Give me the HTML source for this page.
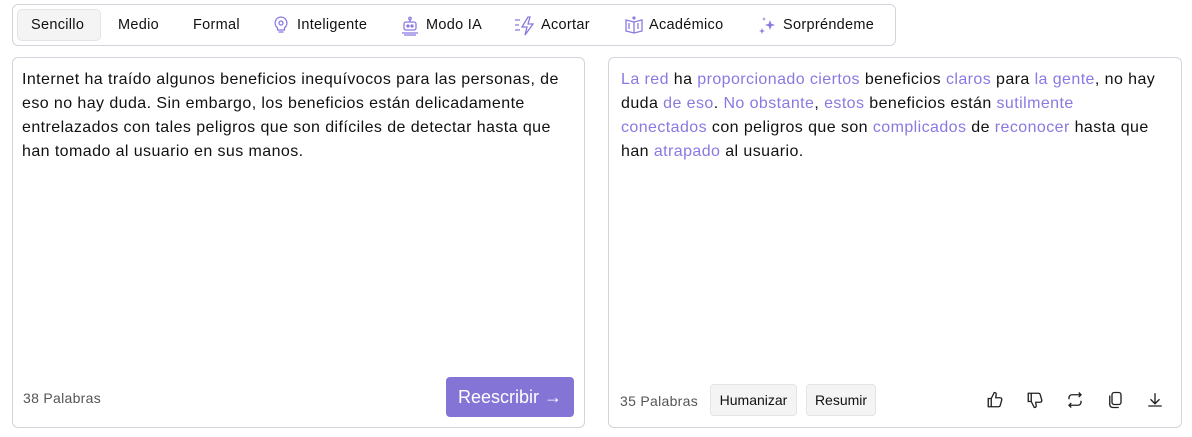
<!DOCTYPE html>
<html><head><meta charset="utf-8"><style>
*{box-sizing:border-box;margin:0;padding:0}
body{width:1192px;height:437px;background:#fff;font-family:"Liberation Sans",sans-serif;color:#111;position:relative;overflow:hidden}
.bar{position:absolute;left:12px;top:4px;width:884px;height:42px;border:1px solid #d4d4dc;border-radius:6px}
.it{position:absolute;top:0;height:40px;line-height:40px;font-size:14.5px;letter-spacing:0.3px;color:#111;white-space:nowrap}
.sel{position:absolute;left:4px;top:4px;width:84px;height:32px;background:#f4f4f5;border:1px solid #e4e4e7;border-radius:5px}
.ic{position:absolute;top:11px}
.panel{position:absolute;top:57px;height:371px;border:1px solid #d4d4dc;border-radius:6px}
.txt{position:absolute;left:9px;top:10px;font-size:16px;letter-spacing:0.42px;line-height:24px;color:#111;white-space:nowrap}
.p{color:#8b78e0}
.cnt{position:absolute;font-size:14px;letter-spacing:0.3px;color:#555}
.btn{position:absolute;background:#f4f4f5;border:1px solid #e4e4e7;border-radius:4px;font-size:14px;text-align:center;line-height:30px;color:#111}
.ri{position:absolute;top:391px}
</style></head><body>
<div class="bar">
 <div class="sel"></div>
 <div class="it" style="left:18px">Sencillo</div>
 <div class="it" style="left:105px">Medio</div>
 <div class="it" style="left:180px">Formal</div>
 <svg class="ic" style="left:260px" width="16" height="18" viewBox="0 0 16 18" fill="none" stroke="#8b78e0" stroke-width="1.3"><path d="M8 1a6 6 0 0 0-3.5 10.8V14h7v-2.2A6 6 0 0 0 8 1z"/><path d="M5.5 16h5"/><circle cx="8" cy="7" r="2"/></svg>
 <div class="it" style="left:284px">Inteligente</div>
 <svg class="ic" style="left:387px" width="20" height="20" viewBox="0 0 20 20" fill="none" stroke="#8b78e0" stroke-width="1.3"><circle cx="10" cy="2.5" r="1.2"/><path d="M10 4v2"/><rect x="4" y="6" width="12" height="8" rx="2"/><circle cx="8" cy="10" r="1" fill="#8b78e0"/><circle cx="12" cy="10" r="1" fill="#8b78e0"/><path d="M2 17h16M4 19h12"/></svg>
 <div class="it" style="left:413px">Modo IA</div>
 <svg class="ic" style="left:501px" width="22" height="20" viewBox="0 0 22 20" fill="none" stroke="#8b78e0" stroke-width="1.3"><path d="M1 4h5M1 9h4M1 14h5"/><path d="M14 1L8 11h5l-2 8 8-11h-5l2-7z"/></svg>
 <div class="it" style="left:528px">Acortar</div>
 <svg class="ic" style="left:612px" width="18" height="18" viewBox="0 0 18 18" fill="none" stroke="#8b78e0" stroke-width="1.3"><path d="M1 4l8 2 8-2v11l-8 2-8-2z"/><path d="M9 6v11"/><circle cx="9" cy="2" r="1"/><path d="M4 7v6M13 7v6"/></svg>
 <div class="it" style="left:636px">Académico</div>
 <svg class="ic" style="left:745px" width="20" height="20" viewBox="0 0 20 20" fill="#8b78e0"><path d="M12 4l1.3 3.7L17 9l-3.7 1.3L12 14l-1.3-3.7L7 9l3.7-1.3z"/><path d="M4 12l.8 2.2L7 15l-2.2.8L4 18l-.8-2.2L1 15l2.2-.8z"/><path d="M6 1l.5 1.5L8 3l-1.5.5L6 5l-.5-1.5L4 3l1.5-.5z"/></svg>
 <div class="it" style="left:770px">Sorpréndeme</div>
</div>

<div class="panel" style="left:12px;width:573px">
 <div class="txt">Internet ha traído algunos beneficios inequívocos para las personas, de<br>eso no hay duda. Sin embargo, los beneficios están delicadamente<br>entrelazados con tales peligros que son difíciles de detectar hasta que<br>han tomado al usuario en sus manos.</div>
 <div class="cnt" style="left:10px;top:332px">38 Palabras</div>
 <div style="position:absolute;left:433px;top:319px;width:128px;height:40px;background:#8474d6;border-radius:4px;color:#fff;font-size:18px;line-height:40px;text-align:center">Reescribir →</div>
</div>

<div class="panel" style="left:608px;width:574px">
 <div class="txt" style="left:12px"><span class="p">La red</span> ha <span class="p">proporcionado ciertos</span> beneficios <span class="p">claros</span> para <span class="p">la gente</span>, no hay<br>duda <span class="p">de eso</span>. <span class="p">No obstante</span>, <span class="p">estos</span> beneficios están <span class="p">sutilmente</span><br><span class="p">conectados</span> con peligros que son <span class="p">complicados</span> de <span class="p">reconocer</span> hasta que<br>han <span class="p">atrapado</span> al usuario.</div>
 <div class="cnt" style="left:11px;top:335px">35 Palabras</div>
 <div class="btn" style="left:101px;top:326px;width:87px;height:32px">Humanizar</div>
 <div class="btn" style="left:197px;top:326px;width:70px;height:32px">Resumir</div>
</div>
<svg class="ri" style="left:986px" width="18" height="18" viewBox="0 0 24 24" fill="none" stroke="#222" stroke-width="1.8"><path d="M7 10v11H3V10zM7 10l4-8c2 0 3 1 2.5 3L13 9h6c1.5 0 2.5 1.5 2 3l-2 7c-.3 1.2-1.3 2-2.5 2H7"/></svg>
<svg class="ri" style="left:1026px" width="18" height="18" viewBox="0 0 24 24" fill="none" stroke="#222" stroke-width="1.8"><path d="M7 14V3H3v11zM7 14l4 8c2 0 3-1 2.5-3L13 15h6c1.5 0 2.5-1.5 2-3l-2-7c-.3-1.2-1.3-2-2.5-2H7"/></svg>
<svg class="ri" style="left:1066px" width="18" height="18" viewBox="0 0 24 24" fill="none" stroke="#222" stroke-width="1.8"><path d="M17 2l3 3-3 3M4 11V9a4 4 0 0 1 4-4h12M7 22l-3-3 3-3M20 13v2a4 4 0 0 1-4 4H4"/></svg>
<svg class="ri" style="left:1106px" width="18" height="18" viewBox="0 0 24 24" fill="none" stroke="#222" stroke-width="1.8"><rect x="8" y="2" width="12" height="16" rx="3"/><path d="M5 6v12a4 4 0 0 0 4 4h8"/></svg>
<svg class="ri" style="left:1146px" width="18" height="18" viewBox="0 0 24 24" fill="none" stroke="#222" stroke-width="1.8"><path d="M12 3v13M6 11l6 6 6-6M3 20h18"/></svg>
</body></html>
